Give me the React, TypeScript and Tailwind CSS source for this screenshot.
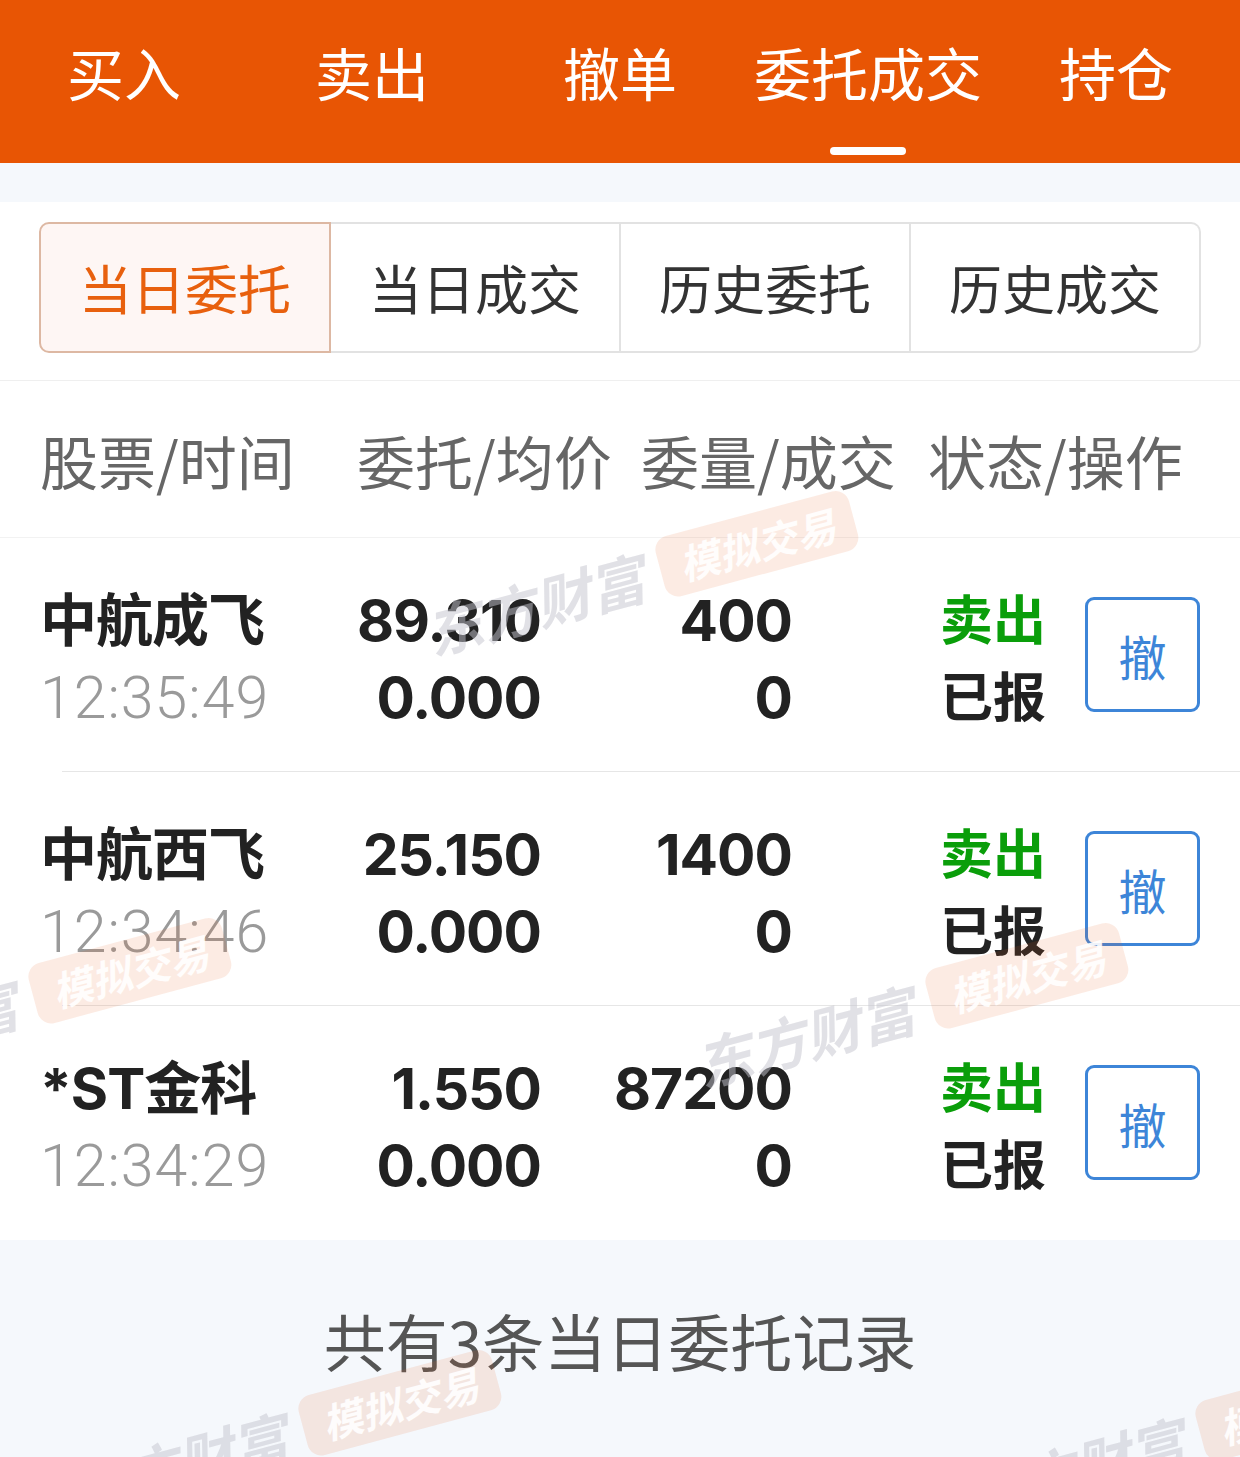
import React from "react";

const tabs = ["买入", "卖出", "撤单", "委托成交", "持仓"];
const segs = ["当日委托", "当日成交", "历史委托", "历史成交"];

type Row = { name: string; time: string; price: string; avg: string; qty: string; deal: string };
const rows: Row[] = [
  { name: "中航成飞", time: "12:35:49", price: "89.310", avg: "0.000", qty: "400", deal: "0" },
  { name: "中航西飞", time: "12:34:46", price: "25.150", avg: "0.000", qty: "1400", deal: "0" },
  { name: "*ST金科", time: "12:34:29", price: "1.550", avg: "0.000", qty: "87200", deal: "0" },
];

function Mark({ pos }: { pos: string }) {
  return (
    <div
      className={`pointer-events-none absolute ${pos} -translate-x-1/2 -translate-y-1/2 -rotate-[15deg] flex items-center gap-[18px] whitespace-nowrap`}
    >
      <span className="text-[56px] leading-none font-bold italic text-[#C4C4CE]/50">东方财富</span>
      <span className="flex h-[62px] items-center rounded-[14px] bg-[#EB6428]/[0.13] px-[20px] text-[40px] leading-none font-bold italic text-white/90">
        模拟交易
      </span>
    </div>
  );
}

export default function App() {
  return (
    <div className="relative flex min-h-[1457px] w-[1240px] flex-col overflow-hidden bg-white font-['Noto_Sans_CJK_SC',sans-serif]">
      {/* top tabs */}
      <div className="grid h-[163px] grid-cols-5 bg-[#E85504]">
        {tabs.map((t, i) => (
          <div key={t} className="flex flex-col items-center pt-[43px]">
            <span className="text-[57px] leading-[57px] text-white">{t}</span>
            <span
              className={`mt-[47px] h-[8px] w-[76px] rounded-full ${i === 3 ? "bg-white" : "bg-transparent"}`}
            />
          </div>
        ))}
      </div>
      <div className="h-[39px] bg-[#F5F8FC]" />

      {/* segment */}
      <div className="border-b border-[#EFEFEF] px-[39px] pt-[20px] pb-[27px]">
        <div className="flex h-[131px]">
          {segs.map((s, i) => (
            <div
              key={s}
              className={
                i === 0
                  ? "flex flex-1 items-center justify-center rounded-l-[10px] border-2 border-[#DDB8A3] bg-[#FEF6F4] text-[53px] text-[#E8600E]"
                  : i === 3
                  ? "flex flex-1 items-center justify-center rounded-r-[10px] border-y-2 border-r-2 border-[#E2E2E2] text-[53px] text-[#333]"
                  : "flex flex-1 items-center justify-center border-y-2 border-r-2 border-[#E2E2E2] text-[53px] text-[#333]"
              }
            >
              {s}
            </div>
          ))}
        </div>
      </div>

      {/* column header */}
      <div className="grid h-[157px] grid-cols-[317px_284px_287px_1fr] items-center border-b border-[#F2F2F2] pt-[1px] pl-[40px] text-[58px] leading-none text-[#666]">
        <span>股票/时间</span>
        <span>委托/均价</span>
        <span>委量/成交</span>
        <span>状态/操作</span>
      </div>

      {/* rows */}
      {rows.map((r, i) => (
        <React.Fragment key={r.name}>
          <div className="grid h-[233px] grid-cols-[260px_241px_251px_148px_1fr_115px] items-center pr-[40px] pl-[40px]">
            <div className="flex flex-col pt-[8px] leading-[77px]">
              <span className="text-[57px] font-bold text-[#222] font-['Inter','Noto_Sans_CJK_SC',sans-serif] tracking-[-1px]">{r.name}</span>
              <span className="whitespace-nowrap text-[59px] font-light text-[#9A9A9A] font-['Roboto',sans-serif] tracking-[1px]">{r.time}</span>
            </div>
            <div className="flex flex-col items-end pt-[8px] leading-[77px] text-[57px] font-bold text-[#222] font-['Inter',sans-serif] tracking-[-1px]">
              <span>{r.price}</span>
              <span>{r.avg}</span>
            </div>
            <div className="flex flex-col items-end pt-[8px] leading-[77px] text-[57px] font-bold text-[#222] font-['Inter',sans-serif] tracking-[-1px]">
              <span>{r.qty}</span>
              <span>{r.deal}</span>
            </div>
            <div />
            <div className="flex flex-col pt-[2px] leading-[77px] text-[53px] font-bold">
              <span className="text-[#0A9E0A]">卖出</span>
              <span className="text-[#222]">已报</span>
            </div>
            <div className="flex h-[115px] w-[115px] items-center justify-center rounded-[9px] border-[3px] border-[#3D85D8] text-[48px] text-[#3D85D8]">
              撤
            </div>
          </div>
          {i < rows.length - 1 ? <div className="ml-[62px] h-px bg-[#E6E6E6]" /> : <div className="h-px" />}
        </React.Fragment>
      ))}

      {/* footer */}
      <div className="flex flex-1 justify-center bg-[#F5F8FC] pt-[69px]">
        <span className="text-[62px] leading-[62px] text-[#555]">共有3条当日委托记录</span>
      </div>

      {/* watermarks */}
      <Mark pos="left-[640px] top-[575px]" />
      <Mark pos="left-[910px] top-[1007px]" />
      <Mark pos="left-[13px] top-[1002px]" />
      <Mark pos="left-[283px] top-[1434px]" />
      <Mark pos="left-[1180px] top-[1439px]" />
    </div>
  );
}
